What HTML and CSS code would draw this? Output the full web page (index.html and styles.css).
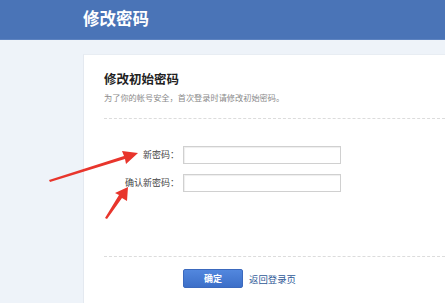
FILE: index.html
```html
<!DOCTYPE html>
<html lang="zh-CN">
<head>
<meta charset="utf-8">
<title>修改密码</title>
<link rel="stylesheet" href="styles.css">
</head>
<body>
<header class="topbar"><h1 class="topbar-title">修改密码</h1></header>
<main class="main">
  <section class="card">
    <h2 class="card-title">修改初始密码</h2>
    <p class="card-sub">为了你的帐号安全，首次登录时请修改初始密码。</p>
    <div class="divider"></div>
    <form class="form">
      <label class="form-label" for="p1">新密码：</label>
      <input class="form-input" id="p1" type="password">
      <label class="form-label" for="p2">确认新密码：</label>
      <input class="form-input" id="p2" type="password">
    </form>
    <div class="divider divider-bottom"></div>
    <div class="actions">
      <button class="btn" type="button">确定</button>
      <a class="back-link" href="#">返回登录页</a>
    </div>
  </section>
</main>
<svg class="annot" width="445" height="303" viewBox="0 0 445 303">
  <path d="M49 180 L124 156 L122 151 L138 153 L126 164 L125 159 L50 182 Z" fill="#e8352c"/>
  <path d="M105 218 L119 195 L115 193 L128 187 L127 201 L122 198 L107 219 Z" fill="#e8352c"/>
</svg>
</body>
</html>
```
FILE: styles.css
```css
* { box-sizing: border-box; }
html, body { margin: 0; padding: 0; }
body {
  width: 445px;
  height: 303px;
  overflow: hidden;
  background: #eef3f9;
  font-family: "Noto Sans CJK SC", "Noto Sans", sans-serif;
  position: relative;
}
.topbar {
  height: 40px;
  background: #4a74b7;
  display: flex;
  align-items: center;
  padding-left: 83px;
  border-bottom: 1px solid #5d83c0;
}
.topbar-title {
  margin: 0;
  color: #fff;
  font-size: 16.5px;
  font-weight: 700;
  line-height: 20px;
  padding-bottom: 4px;
}
.main {
  padding: 14px 0 0 83px;
}
.card {
  background: #fff;
  height: 260px;
  padding: 16px 0 0 20px;
  border-left: 1px solid #e4e9f0;
  border-top: 1px solid #e8edf3;
}
.card-title {
  margin: 0;
  font-size: 12.5px;
  line-height: 16px;
  font-weight: 700;
  color: #222;
}
.card-sub {
  margin: 4px 0 0;
  font-size: 8.2px;
  line-height: 12px;
  color: #8a8a8a;
}
.divider {
  margin-top: 15px;
  border-top: 1px dashed #dcdcdc;
}
.form {
  display: grid;
  grid-template-columns: 75px 158px;
  column-gap: 4px;
  row-gap: 10px;
  align-items: center;
  margin-top: 27px;
}
.form-label {
  text-align: right;
  font-size: 9px;
  color: #444;
  line-height: 12px;
}
.form-input {
  width: 158px;
  height: 18px;
  border: 1px solid #d0d0d0;
  box-shadow: inset 1px 1px 1px #eee;
  padding: 0 4px;
  font-size: 9px;
  outline: none;
  margin: 0;
}
.divider-bottom {
  margin-top: 64px;
}
.actions {
  display: flex;
  align-items: center;
  margin-top: 12px;
  padding-left: 79px;
  gap: 6px;
}
.btn {
  width: 60px;
  height: 19px;
  border: 1px solid #3b69bd;
  border-radius: 2px;
  background: linear-gradient(#5287de, #3c6fc8);
  color: #fff;
  font-family: inherit;
  font-size: 9px;
  font-weight: 700;
  padding: 0;
  line-height: 17px;
}
.back-link {
  font-size: 9.4px;
  color: #2e5897;
  text-decoration: none;
  line-height: 12px;
}
.annot {
  position: absolute;
  left: 0;
  top: 0;
  pointer-events: none;
}
```
